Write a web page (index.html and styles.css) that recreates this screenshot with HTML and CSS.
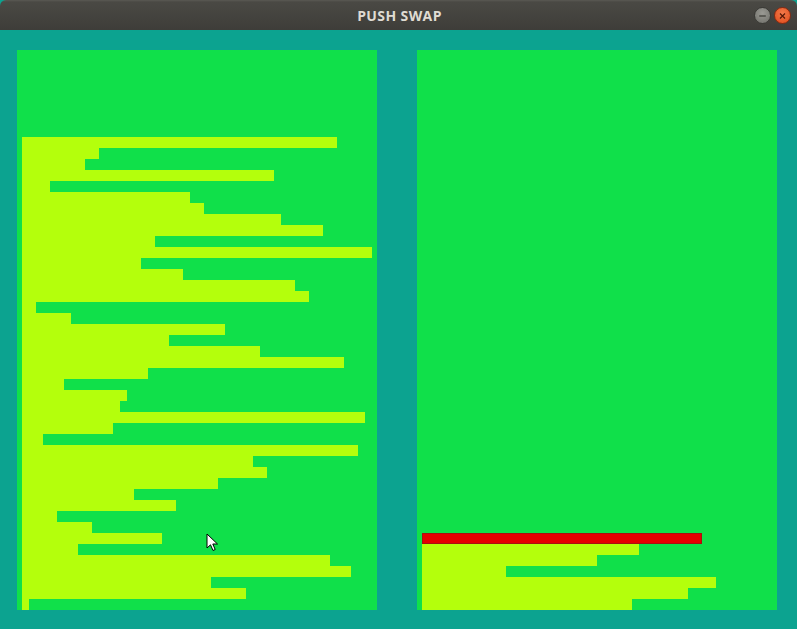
FILE: index.html
```html
<!DOCTYPE html>
<html>
<head>
<meta charset="utf-8">
<link rel="stylesheet" href="styles.css">
</head>
<body>
<div class="window">
  <div class="titlebar">
    <span class="title">PUSH SWAP</span>
    <div class="buttons">
      <span class="btn min"><svg width="16" height="16" viewBox="0 0 16 16"><line x1="4.5" y1="8" x2="11.5" y2="8" stroke="#3a3a36" stroke-width="1.3"/></svg></span>
      <span class="btn close"><svg width="16" height="16" viewBox="0 0 16 16"><path d="M5.3 5.3 L10.7 10.7 M10.7 5.3 L5.3 10.7" stroke="#5a1a08" stroke-width="1.3"/></svg></span>
    </div>
  </div>
  <div class="content">
    <div class="stack">
      <div class="bar" style="width:315px"></div>
      <div class="bar" style="width:77px"></div>
      <div class="bar" style="width:63px"></div>
      <div class="bar" style="width:252px"></div>
      <div class="bar" style="width:28px"></div>
      <div class="bar" style="width:168px"></div>
      <div class="bar" style="width:182px"></div>
      <div class="bar" style="width:259px"></div>
      <div class="bar" style="width:301px"></div>
      <div class="bar" style="width:133px"></div>
      <div class="bar" style="width:350px"></div>
      <div class="bar" style="width:119px"></div>
      <div class="bar" style="width:161px"></div>
      <div class="bar" style="width:273px"></div>
      <div class="bar" style="width:287px"></div>
      <div class="bar" style="width:14px"></div>
      <div class="bar" style="width:49px"></div>
      <div class="bar" style="width:203px"></div>
      <div class="bar" style="width:147px"></div>
      <div class="bar" style="width:238px"></div>
      <div class="bar" style="width:322px"></div>
      <div class="bar" style="width:126px"></div>
      <div class="bar" style="width:42px"></div>
      <div class="bar" style="width:105px"></div>
      <div class="bar" style="width:98px"></div>
      <div class="bar" style="width:343px"></div>
      <div class="bar" style="width:91px"></div>
      <div class="bar" style="width:21px"></div>
      <div class="bar" style="width:336px"></div>
      <div class="bar" style="width:231px"></div>
      <div class="bar" style="width:245px"></div>
      <div class="bar" style="width:196px"></div>
      <div class="bar" style="width:112px"></div>
      <div class="bar" style="width:154px"></div>
      <div class="bar" style="width:35px"></div>
      <div class="bar" style="width:70px"></div>
      <div class="bar" style="width:140px"></div>
      <div class="bar" style="width:56px"></div>
      <div class="bar" style="width:308px"></div>
      <div class="bar" style="width:329px"></div>
      <div class="bar" style="width:189px"></div>
      <div class="bar" style="width:224px"></div>
      <div class="bar" style="width:7px"></div>
    </div>
    <div class="stack">
      <div class="bar active" style="width:280px"></div>
      <div class="bar" style="width:217px"></div>
      <div class="bar" style="width:175px"></div>
      <div class="bar" style="width:84px"></div>
      <div class="bar" style="width:294px"></div>
      <div class="bar" style="width:266px"></div>
      <div class="bar" style="width:210px"></div>
    </div>
    <svg class="cursor" width="14" height="20" viewBox="0 0 14 20"><path d="M1 1 L1 15 L4.5 11.8 L7 17.5 L9.2 16.5 L6.8 11 L11.5 11 Z" fill="#ffffff" stroke="#000000" stroke-width="1" stroke-linejoin="round"/></svg>
  </div>
</div>
</body>
</html>
```
FILE: styles.css
```css
html, body {
  margin: 0;
  padding: 0;
  background: #0ca390;
}
.window {
  width: 797px;
  height: 629px;
  display: flex;
  flex-direction: column;
  overflow: hidden;
}
.titlebar {
  height: 30px;
  flex: 0 0 30px;
  background: linear-gradient(#5a5953 0px, #4a4944 2px, #3e3d39 30px);
  border-radius: 6px 6px 0 0;
  display: flex;
  align-items: center;
  justify-content: center;
  position: relative;
}
.title {
  font-family: "Open Sans", "DejaVu Sans", sans-serif;
  font-weight: 700;
  font-size: 14px;
  color: #dfdbd2;
  letter-spacing: 0.4px;
  margin-left: 2px;
}
.buttons {
  position: absolute;
  right: 6px;
  top: 7px;
  display: flex;
  gap: 3px;
}
.btn {
  width: 17px;
  height: 17px;
  border-radius: 50%;
  display: flex;
  align-items: center;
  justify-content: center;
  box-sizing: border-box;
}
.btn.min {
  background: radial-gradient(circle at 50% 35%, #9a9a94, #6e6e68);
  border: 1px solid #3a3a36;
}
.btn.close {
  background: radial-gradient(circle at 50% 35%, #f47a4a, #df4a1a);
  border: 1px solid #8a2a10;
}
.content {
  flex: 1;
  background: #0ca390;
  display: flex;
  gap: 40px;
  padding: 20px 20px 19px 17px;
  position: relative;
}
.stack {
  width: 355px;
  height: 560px;
  background: #10e04a;
  padding-left: 5px;
  display: flex;
  flex-direction: column;
  justify-content: flex-end;
}
.bar {
  height: 11px;
  flex: 0 0 11px;
  background: #b4ff0c;
}
.bar.active {
  background: #e60000;
  box-sizing: border-box;
  border: 1px solid #a81010;
}
.cursor {
  position: absolute;
  left: 206px;
  top: 503px;
}
```
